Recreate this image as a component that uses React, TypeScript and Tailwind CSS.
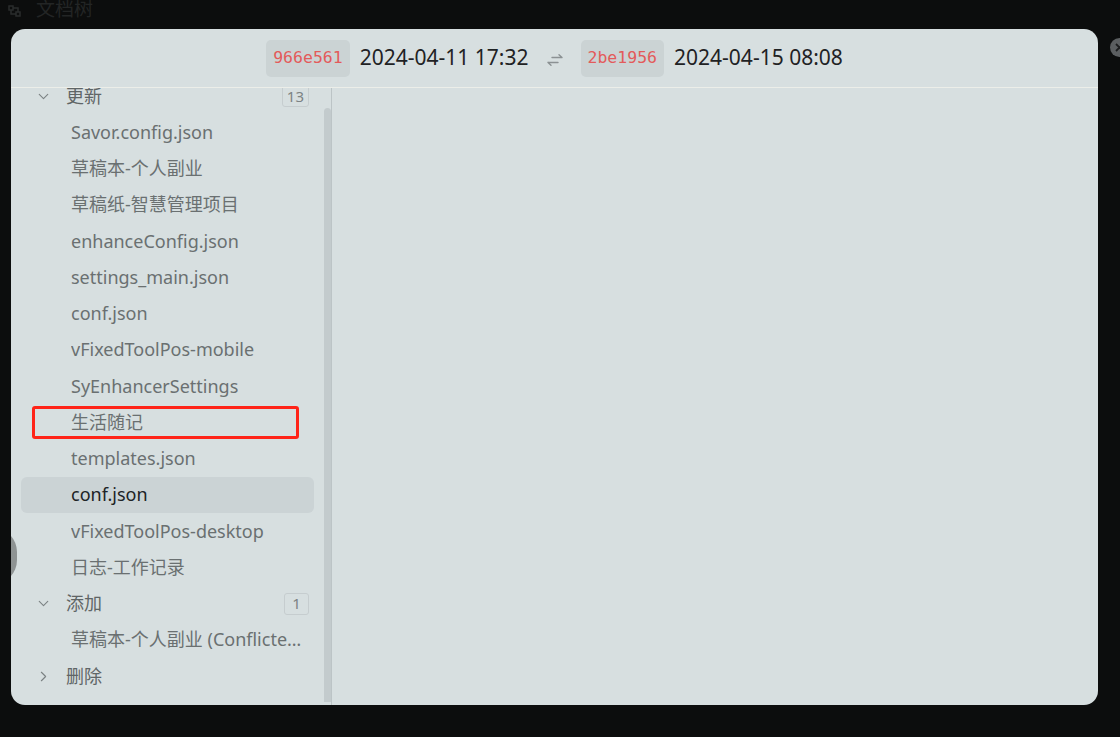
import { ChevronDown, ChevronRight } from 'lucide-react';

type Row =
  | { kind: 'group'; label: string; open: boolean; count?: number }
  | { kind: 'file'; label: string; active?: boolean };

const ROWS: Row[] = [
  { kind: 'group', label: '更新', open: true, count: 13 },
  { kind: 'file', label: 'Savor.config.json' },
  { kind: 'file', label: '草稿本-个人副业' },
  { kind: 'file', label: '草稿纸-智慧管理项目' },
  { kind: 'file', label: 'enhanceConfig.json' },
  { kind: 'file', label: 'settings_main.json' },
  { kind: 'file', label: 'conf.json' },
  { kind: 'file', label: 'vFixedToolPos-mobile' },
  { kind: 'file', label: 'SyEnhancerSettings' },
  { kind: 'file', label: '生活随记' },
  { kind: 'file', label: 'templates.json' },
  { kind: 'file', label: 'conf.json', active: true },
  { kind: 'file', label: 'vFixedToolPos-desktop' },
  { kind: 'file', label: '日志-工作记录' },
  { kind: 'group', label: '添加', open: true, count: 1 },
  { kind: 'file', label: '草稿本-个人副业 (Conflicted copy)' },
  { kind: 'group', label: '删除', open: false },
];

const SANS = 'font-["Noto_Sans","Noto_Sans_CJK_SC",sans-serif]';

function Hash({ value }: { value: string }) {
  return (
    <span className='h-[37px] px-[7px] flex items-center rounded-[5px] bg-[#cbd3d4] text-[#e35b5b] text-[16.5px] font-["DejaVu_Sans_Mono",monospace]'>
      {value}
    </span>
  );
}

function SwapIcon() {
  return (
    <svg width="20" height="14" viewBox="0 0 20 14" fill="none" stroke="#8b9193" strokeWidth="1.4" strokeLinecap="round" strokeLinejoin="round">
      <path d="M7 4.5h10M14 1.8l3 2.7" />
      <path d="M13 9.5H3M6 12.2 3 9.5" />
    </svg>
  );
}

export default function App() {
  return (
    <div className={`relative w-[1120px] h-[737px] overflow-hidden bg-[#0c0d0d] ${SANS}`}>
      {/* underlying app title */}
      <div className="absolute left-[8px] top-[-5px] flex items-center gap-[15px] text-[#232525] text-[19px]">
        <svg className="mt-[4px]" width="13" height="12" viewBox="0 0 13 12" fill="none" stroke="#2a2c2c" strokeWidth="1.5">
          <rect x="1" y="1" width="4" height="4" />
          <rect x="8" y="7" width="4" height="4" />
          <path d="M3 5v4h5M5 3h5v4" />
        </svg>
        <span>文档树</span>
      </div>

      {/* close button peeking at right */}
      <div className="absolute left-[1110px] top-[38px] w-[19px] h-[19px] rounded-full bg-[#5b5e60] flex items-center justify-center">
        <svg width="9" height="9" viewBox="0 0 9 9" stroke="#1c1d1e" strokeWidth="1.8">
          <path d="M1 1l7 7M8 1 1 8" />
        </svg>
      </div>

      {/* dialog */}
      <div className="absolute left-[11px] top-[29px] w-[1087px] h-[676px] rounded-[14px] bg-[#d7dfe0] overflow-hidden flex flex-col">
        <div className="h-[59px] shrink-0 border-b border-[#eceee9] flex items-center justify-center gap-[10px]">
          <Hash value="966e561" />
          <span className="text-[21px] text-[#1f2224]">2024-04-11 17:32</span>
          <span className="px-[6px] pt-[3px]">
            <SwapIcon />
          </span>
          <Hash value="2be1956" />
          <span className="text-[21px] text-[#1f2224]">2024-04-15 08:08</span>
        </div>

        <div className="flex flex-1 min-h-0">
          <div className="relative w-[321px] shrink-0 border-r border-[#bcc4c6] overflow-hidden">
            <div className="mt-[-10px] pl-[10px] pr-[17px]">
              {ROWS.map((row, i) =>
                row.kind === 'group' ? (
                  <div key={i} className="h-[36.25px] flex items-center text-[18px] text-[#5f6566]">
                    <span className="w-[45px] pl-[14px] flex items-center text-[#7c8384]">
                      {row.open ? <ChevronDown size={17} strokeWidth={1.6} /> : <ChevronRight size={17} strokeWidth={1.6} />}
                    </span>
                    <span className="flex-1">{row.label}</span>
                    {row.count !== undefined && (
                      <span className="min-w-[25px] h-[22px] px-[4px] mr-[5px] flex items-center justify-center rounded-[3px] border border-[#c6cdcf] text-[15px] text-[#7c8384]">
                        {row.count}
                      </span>
                    )}
                  </div>
                ) : (
                  <div
                    key={i}
                    className={`h-[36.25px] flex items-center pl-[50px] pr-[12px] rounded-[6px] text-[18px] ${
                      row.active ? 'bg-[#cbd3d5] text-[#202325]' : 'text-[#6a7071]'
                    }`}
                  >
                    <span className="truncate">{row.label}</span>
                  </div>
                )
              )}
            </div>
            {/* scrollbar thumb */}
            <div className="absolute left-[313px] top-[20px] bottom-[3px] w-[7px] rounded-t-[4px] bg-[#c3cbcd]" />
          </div>
          <div className="flex-1" />
        </div>

        {/* grey circle peeking from left edge */}
        <div className="absolute left-[-42px] top-[499px] w-[48px] h-[56px] rounded-full bg-[#8e9393]" />
      </div>

      {/* red annotation box */}
      <div className="absolute left-[32px] top-[406px] w-[267px] h-[33px] rounded-[3px] border-[3px] border-[#ff2418]" />
    </div>
  );
}
